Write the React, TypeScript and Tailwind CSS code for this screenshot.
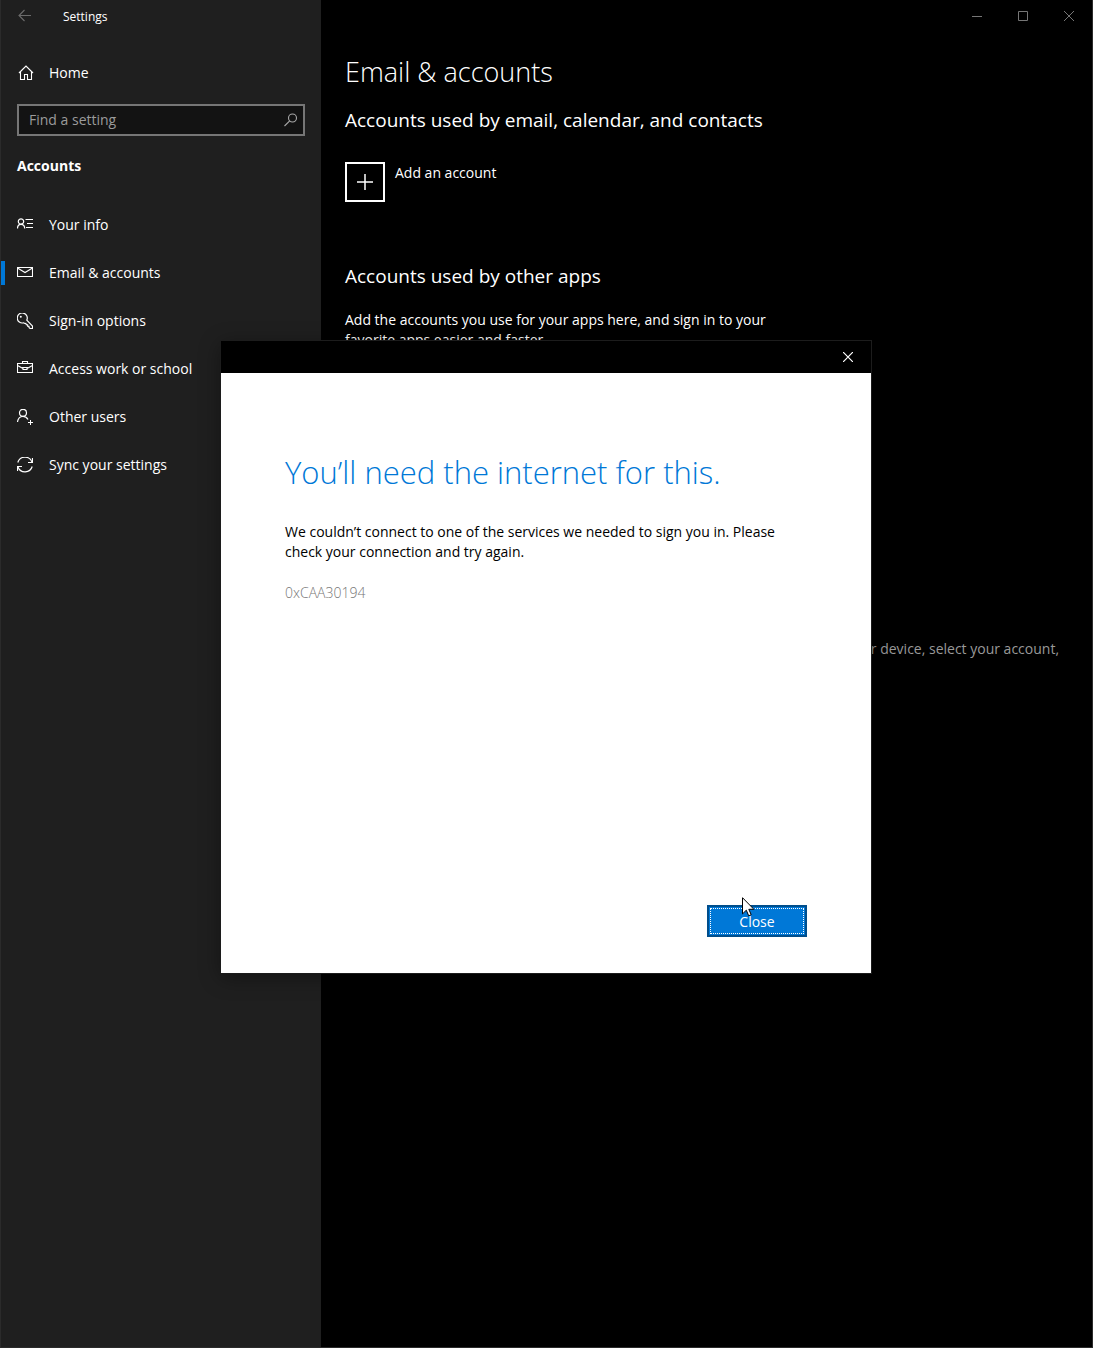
import React from "react";

type IconProps = { children: React.ReactNode; size?: number };

function Icon({ children, size = 16 }: IconProps) {
  return (
    <svg
      aria-hidden="true"
      width={size}
      height={size}
      viewBox={`0 0 ${size} ${size}`}
      fill="none"
      stroke="currentColor"
      strokeWidth="1"
      className="shrink-0"
    >
      {children}
    </svg>
  );
}

const icons = {
  home: (
    <Icon>
      <path d="M1 8 8 1l7 7" strokeWidth="1.2" />
      <path d="M2.500 7v7.500h4v-5h3v5h4V7" strokeWidth="1.1" />
    </Icon>
  ),
  info: (
    <Icon>
      <circle cx="4" cy="4.500" r="2.700" strokeWidth="1.200" />
      <path d="M.500 11.500c0-2.600 1.400-4.200 3.500-4.200s3.700 1.600 3.700 4.200" strokeWidth="1.200" />
      <path d="M8.500 2.500H16M10 6.500h6M9 10.500h7" />
    </Icon>
  ),
  mail: (
    <Icon>
      <path d="M.5 2.500h15v9H.5z" strokeWidth="1.1" />
      <path d="M.5 3 8 7.500 15.500 3" strokeWidth="1.1" />
    </Icon>
  ),
  key: (
    <Icon>
      <path
        d="M9.800 7.100A5 5 0 1 0 6.600 9.800l1.200.7 1-.1.500 1.300 1.300.1.100 1.400 1.200.1.200 1.400 1.100.8h2.300v-2.300z"
        strokeWidth="1.2"
      />
      <circle cx="3.800" cy="3.800" r="1" fill="currentColor" stroke="none" />
    </Icon>
  ),
  work: (
    <Icon>
      <path d="M.5 2.500h15v9H.5zM5.500 2.500v-2h5v2" strokeWidth="1.1" />
      <path d="M.5 4.500 6 7.500M15.500 4.500 10 7.500M6 6.500h4v2H6z" strokeWidth="1.1" />
    </Icon>
  ),
  users: (
    <Icon>
      <circle cx="6" cy="3.800" r="3.500" strokeWidth="1.200" />
      <path d="M.5 13c.3-3.200 2.500-5.700 5.500-5.700 2.200 0 4.100 1.300 5 3.200" strokeWidth="1.200" />
      <path d="M13.500 11v5M11 13.500h5" />
    </Icon>
  ),
  sync: (
    <Icon>
      <path d="M.8 5.500A7.500 7.500 0 0 1 15 5M15.200 9.500A7.500 7.500 0 0 1 1 10" strokeWidth="1.200" />
      <path d="M15.500 1v4.500H11M.500 14V9.500H5" strokeWidth="1.200" />
    </Icon>
  ),
};

const navItems = [
  { label: "Your info", icon: icons.info, active: false },
  { label: "Email & accounts", icon: icons.mail, active: true },
  { label: "Sign-in options", icon: icons.key, active: false },
  { label: "Access work or school", icon: icons.work, active: false },
  { label: "Other users", icon: icons.users, active: false },
  { label: "Sync your settings", icon: icons.sync, active: false },
];

function Sidebar() {
  return (
    <aside className="flex w-80 shrink-0 flex-col bg-[#1f1f1f]">
      <header className="flex h-8 items-center">
        <button aria-label="Back" className="flex h-8 w-12 items-center justify-center text-[#6b6b6b]">
          <Icon>
            <path d="M2 7.500h12M7.500 2 2 7.500 7.500 13" strokeWidth="1.100" />
          </Icon>
        </button>
        <span className="ml-3.5 pt-0.5 text-xs">Settings</span>
      </header>
      <a href="#home" className="mt-[17px] flex h-12 items-center gap-[15px] pl-[17px]">
        {icons.home}
        Home
      </a>
      <label className="mx-4 mt-[7px] flex h-8 items-center border-2 border-[#767676] bg-[#131313] pr-1 pl-2.5">
        <input
          type="text"
          aria-label="Find a setting"
          placeholder="Find a setting"
          className="min-w-0 flex-1 bg-transparent outline-none placeholder:text-[#9b9b9b]"
        />
        <span className="text-[#a8a8a8]">
          <Icon>
            <circle cx="9.500" cy="6" r="4" strokeWidth="1.100" />
            <path d="M6.700 8.800 1.500 14" strokeWidth="1.100" />
          </Icon>
        </span>
      </label>
      <h2 className="mt-5 pl-4 leading-5 font-bold">Accounts</h2>
      <nav className="mt-[25px] flex flex-col">
        {navItems.map((item) => (
          <a
            key={item.label}
            href="#settings"
            aria-current={item.active ? "page" : undefined}
            className="flex h-12 items-center"
          >
            <span className={item.active ? "h-6 w-1 bg-[#0078d7]" : "h-6 w-1"} />
            <span className="mr-4 ml-3">{item.icon}</span>
            {item.label}
          </a>
        ))}
      </nav>
    </aside>
  );
}

function WindowControls() {
  return (
    <div className="flex h-8 justify-end text-[#767676]">
      <button aria-label="Minimize" className="flex w-[46px] items-center justify-center">
        <Icon size={10}>
          <path d="M0 5.500h10" />
        </Icon>
      </button>
      <button aria-label="Maximize" className="flex w-[46px] items-center justify-center">
        <Icon size={10}>
          <path d="M.5.5h9v9h-9z" />
        </Icon>
      </button>
      <button aria-label="Close window" className="flex w-[46px] items-center justify-center">
        <Icon size={10}>
          <path d="m0 0 10 10M10 0 0 10" />
        </Icon>
      </button>
    </div>
  );
}

function Main() {
  return (
    <main className="flex min-w-0 flex-1 flex-col bg-black">
      <WindowControls />
      <div className="pr-[33px] pl-6">
        <h1 className="mt-5 text-[27px] leading-10 font-light">Email &amp; accounts</h1>
        <h2 className="mt-3.5 text-[19px] leading-7">Accounts used by email, calendar, and contacts</h2>
        <button className="mt-7 flex items-start gap-2.5">
          <span className="flex size-10 items-center justify-center border-2 border-white">
            <Icon>
              <path d="M8 0v16M0 8h16" strokeWidth="1.500" />
            </Icon>
          </span>
          <span className="leading-[22px]">Add an account</span>
        </button>
        <h2 className="mt-[60px] text-[19px] leading-7">Accounts used by other apps</h2>
        <p className="mt-5 max-w-[440px] leading-5">
          Add the accounts you use for your apps here, and sign in to your favorite apps easier and faster.
        </p>
        <p className="mt-[289px] text-right leading-5 text-[#999999]">your device, select your account,</p>
      </div>
    </main>
  );
}

function Cursor() {
  return (
    <svg
      aria-hidden="true"
      width="13"
      height="20"
      viewBox="0 0 13 20"
      className="pointer-events-none absolute -top-2 left-[35px]"
    >
      <path
        d="M.5.700v16.200l3.800-3.700 2.400 5.600 2.500-1.100-2.400-5.400h5.100z"
        fill="#fff"
        stroke="#000"
        strokeWidth="1"
      />
    </svg>
  );
}

function SignInDialog() {
  return (
    <div className="absolute inset-0 flex items-start justify-center pt-[341px]">
      <section
        role="dialog"
        aria-labelledby="dialog-title"
        className="mr-px flex w-[650px] max-w-full flex-col bg-white text-black shadow-[0_0_0_1px_#1c1c1c,0_4px_20px_rgba(0,0,0,0.4)]"
      >
        <div className="flex h-8 justify-end bg-black text-white">
          <button aria-label="Close dialog" className="flex w-[46px] items-center justify-center">
            <Icon size={10}>
              <path d="m0 0 10 10M10 0 0 10" strokeWidth="1.200" />
            </Icon>
          </button>
        </div>
        <div className="flex flex-col px-16 pt-[76px] pb-9">
          <h2 id="dialog-title" className="text-[31px] leading-[46px] font-light text-[#0078d7]">
            You’ll need the internet for this.
          </h2>
          <p className="mt-[27px] leading-5">
            We couldn’t connect to one of the services we needed to sign you in. Please check your connection and
            try again.
          </p>
          <p className="mt-[21px] leading-5 font-light text-[#767676]">0xCAA30194</p>
          <div className="relative mt-[302px] w-[100px] self-end">
            <button className="h-8 w-full border-2 border-[#004e8c] bg-[#0078d7] p-px text-white">
              <span className="flex h-full items-center justify-center border border-dotted border-white pt-0.5">
                Close
              </span>
            </button>
            <Cursor />
          </div>
        </div>
      </section>
    </div>
  );
}

export default function App() {
  return (
    <div className="relative flex min-h-screen border-x border-b border-[#2b2b2b] bg-black font-['Open_Sans','Noto_Sans',sans-serif] text-sm text-white">
      <Sidebar />
      <Main />
      <SignInDialog />
    </div>
  );
}
